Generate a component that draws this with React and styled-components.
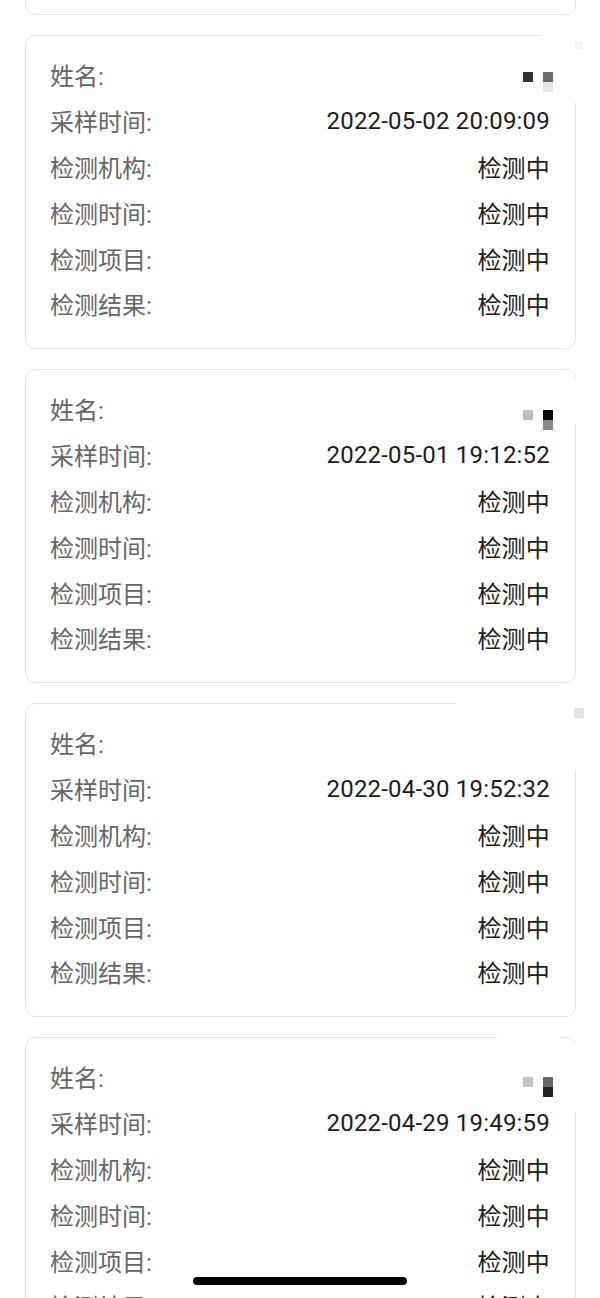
import React from "react";
import styled, { createGlobalStyle } from "styled-components";

const GlobalStyle = createGlobalStyle`
  html, body {
    margin: 0;
    padding: 0;
    background: #ffffff;
    overflow: hidden;
  }
  body {
    font-family: Roboto, "Noto Sans CJK SC", sans-serif;
  }
`;

const Page = styled.div`
  width: 600px;
  height: 1298px;
  overflow: hidden;
  position: relative;
  background: #fff;
`;

const List = styled.div`
  display: flex;
  flex-direction: column;
  gap: 20px;
  padding: 0 24px 0 25px;
  margin-top: -299px;
`;

const Card = styled.div`
  position: relative;
  box-sizing: border-box;
  height: 314px;
  flex-shrink: 0;
  border: 1px solid #e3e3e3;
  border-radius: 10px;
  padding: 16px 25px 0 24px;
  background: #fff;
`;

const Row = styled.div`
  display: flex;
  justify-content: space-between;
  align-items: center;
  height: 45.8px;
  font-size: 24px;
`;

const Label = styled.span`
  color: #666666;
`;

const Value = styled.span`
  color: #1c1c1c;
  letter-spacing: 0.2px;
`;

/* redaction patch laid over the name and the card edge */
const Mask = styled.div`
  position: absolute;
  background: #fff;
  left: ${(p) => p.$x}px;
  top: ${(p) => p.$y}px;
  width: ${(p) => p.$w}px;
  height: ${(p) => p.$h}px;
`;

const Cell = styled.div`
  position: absolute;
  left: ${(p) => p.$x}px;
  top: ${(p) => p.$y}px;
  width: ${(p) => p.$s || 10}px;
  height: ${(p) => p.$s || 10}px;
  background: ${(p) => p.$c};
`;

const HomeBar = styled.div`
  position: absolute;
  left: 193px;
  bottom: 13px;
  width: 214px;
  height: 8px;
  border-radius: 4px;
  background: #000;
`;

const records = [
  { time: null, masks: [], cells: [] },
  {
    time: "2022-05-02 20:09:09",
    masks: [{ x: 514, y: -3, w: 60, h: 70 }],
    cells: [
      { x: 497, y: 36, c: "#333333" },
      { x: 517, y: 36, c: "#6b6b6b" },
      { x: 517, y: 46, c: "#e6e6e6" },
      { x: 549, y: 5, c: "#f3f3f3", s: 8 },
    ],
  },
  {
    time: "2022-05-01 19:12:52",
    masks: [{ x: 542, y: 8, w: 40, h: 47 }],
    cells: [
      { x: 497, y: 40, c: "#bdbdbd" },
      { x: 517, y: 40, c: "#0b0b0b" },
      { x: 517, y: 50, c: "#8a8a8a" },
    ],
  },
  {
    time: "2022-04-30 19:52:32",
    masks: [{ x: 429, y: -4, w: 150, h: 70 }],
    cells: [{ x: 548, y: 4, c: "#e3e3e3" }],
  },
  {
    time: "2022-04-29 19:49:59",
    masks: [
      { x: 471, y: -4, w: 63, h: 8 },
      { x: 540, y: 6, w: 40, h: 68 },
    ],
    cells: [
      { x: 497, y: 39, c: "#c2c2c2" },
      { x: 517, y: 39, c: "#676767" },
      { x: 517, y: 49, c: "#222222" },
    ],
  },
];

function RecordCard({ data }) {
  // the card scrolled above the top edge shows only its bottom border
  if (!data.time) return <Card />;

  const rows = [
    ["采样时间:", data.time],
    ["检测机构:", "检测中"],
    ["检测时间:", "检测中"],
    ["检测项目:", "检测中"],
    ["检测结果:", "检测中"],
  ];
  return (
    <Card>
      <Row>
        <Label>姓名:</Label>
        <Value></Value>
      </Row>
      {rows.map(([k, v]) => (
        <Row key={k}>
          <Label>{k}</Label>
          <Value>{v}</Value>
        </Row>
      ))}
      {data.masks.map((m, i) => (
        <Mask key={"m" + i} $x={m.x} $y={m.y} $w={m.w} $h={m.h} />
      ))}
      {data.cells.map((c, i) => (
        <Cell key={"c" + i} $x={c.x} $y={c.y} $c={c.c} $s={c.s} />
      ))}
    </Card>
  );
}

export default function App() {
  return (
    <>
      <GlobalStyle />
      <Page>
        <List>
          {records.map((r, i) => (
            <RecordCard key={i} data={r} />
          ))}
        </List>
        <HomeBar />
      </Page>
    </>
  );
}
